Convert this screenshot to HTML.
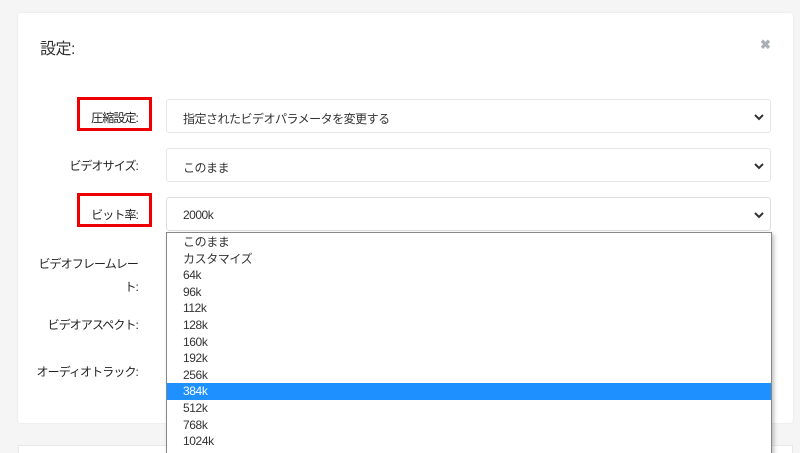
<!DOCTYPE html>
<html><head><meta charset="utf-8"><style>
*{margin:0;padding:0;box-sizing:border-box}
html,body{width:800px;height:453px;overflow:hidden}
body{background:#f5f5f5;font-family:"Liberation Sans","Noto Sans CJK JP",sans-serif;color:#333;position:relative}
.card{position:absolute;left:18px;top:13px;width:775px;height:410px;background:#fff;border-radius:3px;box-shadow:0 0 2px rgba(0,0,0,.08)}
.card2{position:absolute;left:18px;top:445px;width:775px;height:20px;background:#fff;border:1px solid #e8e8e8}
.t{position:absolute;font-size:12px;color:#333;white-space:nowrap}
.lbl{position:absolute;right:662px;font-size:12px;text-align:right;white-space:nowrap;letter-spacing:-0.9px;color:#222}
.sel{position:absolute;left:166px;width:605px;height:34px;border:1px solid #e6e6e6;border-radius:3px;background:#fff}
.sel span{position:absolute;left:16px;top:10px;font-size:12px;letter-spacing:-0.5px}
.sel svg{position:absolute;right:6px;top:13px}
.red{position:absolute;border:3px solid #e00;left:77px;width:75px;height:34px}
.dd{position:absolute;left:166px;top:232px;width:606px;height:230px;background:#fff;border:1px solid #888;box-shadow:2px 2px 4px rgba(0,0,0,.25);padding-top:1px}
.dd div{height:16.6px;line-height:16.6px;padding-left:16px;font-size:12px;color:#333;letter-spacing:-0.4px}
.dd .hl{background:#1e90ff;color:#fff}
</style></head><body>
<div class="card"></div>
<div class="card2"></div>
<div class="t" style="left:40px;top:35px;font-size:16px;letter-spacing:-0.5px">設定:</div>
<div class="t" style="left:760px;top:37px;font-size:13px;color:#aab0b5;font-weight:bold">✖</div>
<div class="red" style="top:97px"></div>
<div class="red" style="top:193px"></div>
<div class="lbl" style="top:109px">圧縮設定:</div>
<div class="lbl" style="top:157px">ビデオサイズ:</div>
<div class="lbl" style="top:206px">ビット率:</div>
<div class="lbl" style="top:255px">ビデオフレームレー</div>
<div class="lbl" style="top:278px">ト:</div>
<div class="lbl" style="top:316px">ビデオアスペクト:</div>
<div class="lbl" style="top:363px">オーディオトラック:</div>
<div class="sel" style="top:99px"><span>指定されたビデオパラメータを変更する</span><svg width="10" height="8"><path d="M1 2 L5 6 L9 2" stroke="#333" stroke-width="2" fill="none"/></svg></div>
<div class="sel" style="top:148px"><span>このまま</span><svg width="10" height="8"><path d="M1 2 L5 6 L9 2" stroke="#333" stroke-width="2" fill="none"/></svg></div>
<div class="sel" style="top:197px;border-color:#ddd"><span>2000k</span><svg width="10" height="8"><path d="M1 2 L5 6 L9 2" stroke="#333" stroke-width="2" fill="none"/></svg></div>
<div class="dd">
<div>このまま</div><div>カスタマイズ</div><div>64k</div><div>96k</div><div>112k</div><div>128k</div><div>160k</div><div>192k</div><div>256k</div><div class="hl">384k</div><div>512k</div><div>768k</div><div>1024k</div>
</div>
</body></html>
